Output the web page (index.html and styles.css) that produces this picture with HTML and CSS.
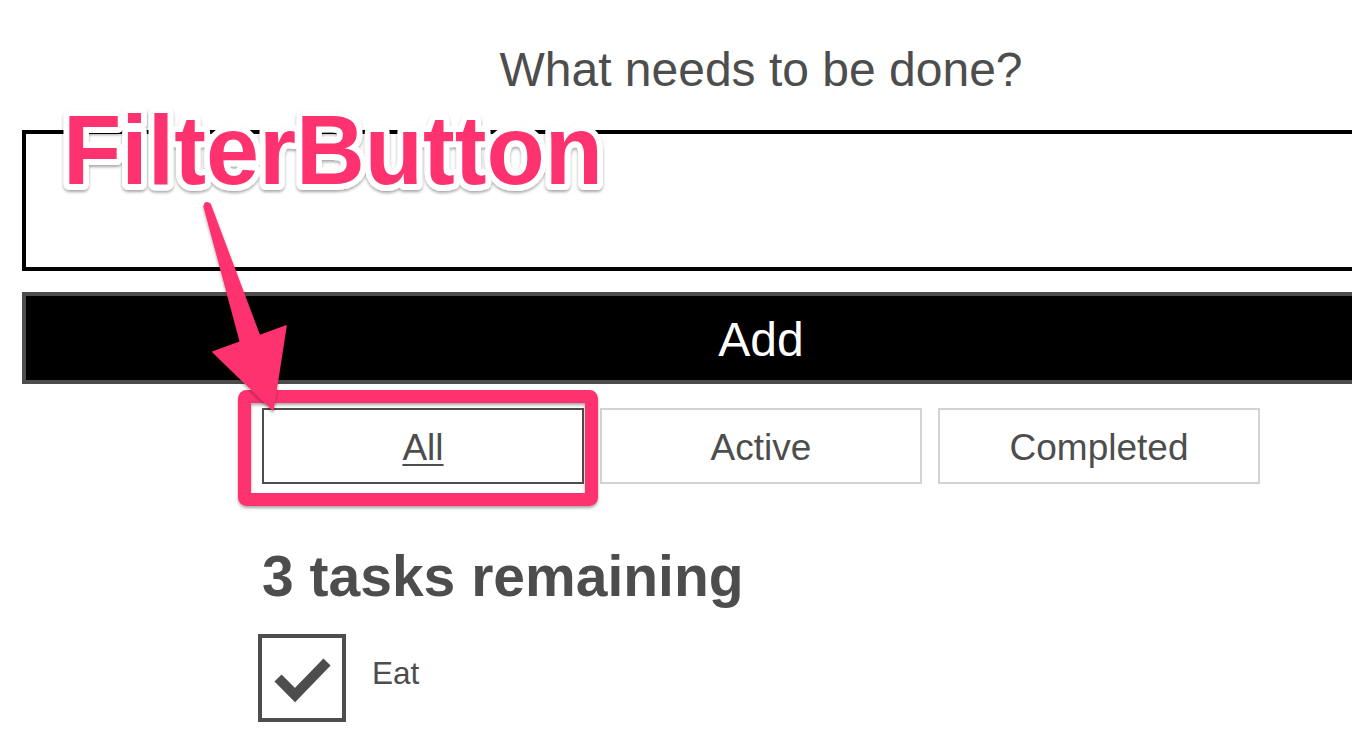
FILE: index.html
```html
<!DOCTYPE html>
<html lang="en">
<head>
<meta charset="utf-8">
<title>Todo</title>
<link rel="stylesheet" href="styles.css">
</head>
<body>
<div class="page">
  <main class="todoapp">
    <h1 class="title">What needs to be done?</h1>
    <input class="new-todo" type="text" aria-label="New todo">
    <button class="add-btn" type="button">Add</button>
    <div class="filters">
      <button class="filter is-pressed" type="button"><span class="filter-label">All</span></button>
      <button class="filter" type="button"><span>Active</span></button>
      <button class="filter" type="button"><span>Completed</span></button>
    </div>
    <section class="list">
      <h2 class="list-heading">3 tasks remaining</h2>
      <ul class="todo-list">
        <li class="todo">
          <span class="check">
            <svg viewBox="0 0 80 80" width="80" height="80" aria-hidden="true">
              <polyline points="16,40 33,57 65,24" fill="none" stroke="#4d4d4d" stroke-width="10" stroke-linejoin="miter"/>
            </svg>
          </span>
          <span class="todo-label">Eat</span>
        </li>
      </ul>
    </section>
  </main>
  <svg class="annotation" width="1352" height="738" viewBox="0 0 1352 738" aria-hidden="true">
    <defs>
      <filter id="shadow" x="-10%" y="-10%" width="120%" height="130%">
        <feDropShadow dx="0" dy="2" stdDeviation="1.6" flood-color="#000" flood-opacity="0.35"/>
      </filter>
    </defs>
    <rect x="244.5" y="396.5" width="347" height="103" rx="2" ry="2" fill="none" stroke="#ff3170" stroke-width="13" filter="url(#shadow)"/>
    <g filter="url(#shadow)">
      <path d="M204,206 L240.5,342 L213,352 L273,410 L286,326 L259.5,335.7 L210,204 Z" fill="#ff3170" stroke="#ff3170" stroke-width="1.5" stroke-linejoin="round"/>
      <circle cx="207" cy="205" r="3" fill="#ff3170"/>
    </g>
    <text class="anno-text" x="63" y="184" textLength="540" lengthAdjust="spacingAndGlyphs" filter="url(#shadow)">FilterButton</text>
  </svg>
</div>
</body>
</html>
```

FILE: styles.css
```css
html, body {
  margin: 0;
  padding: 0;
  overflow: hidden;
  background: #fff;
}

body {
  font-family: "Liberation Sans", Arial, sans-serif;
  color: #4d4d4d;
}

.page {
  position: relative;
  width: 1352px;
  height: 738px;
  overflow: hidden;
}

.todoapp {
  width: 1478px;
  margin-left: 22px;
  padding-top: 42px;
  display: flex;
  flex-direction: column;
}

.title {
  margin: 0;
  font-size: 48px;
  line-height: 56px;
  font-weight: normal;
  text-align: center;
  color: #4d4d4d;
}

.new-todo {
  display: block;
  box-sizing: border-box;
  width: 100%;
  height: 141px;
  margin: 32px 0 0;
  border: 4px solid #000;
  padding: 0 16px;
  font-family: inherit;
  font-size: 40px;
  background: #fff;
  outline: none;
}

.add-btn {
  display: flex;
  align-items: center;
  justify-content: center;
  box-sizing: border-box;
  width: 100%;
  height: 92px;
  margin: 21px 0 0;
  border: 4px solid #4d4d4d;
  background: #000;
  color: #fff;
  font-family: inherit;
  font-size: 48px;
  padding: 3px 0 0;
}

.filters {
  display: flex;
  justify-content: center;
  gap: 16px;
  margin-top: 24px;
}

.filter {
  box-sizing: border-box;
  width: 322px;
  height: 76px;
  border: 2px solid #d3d3d3;
  background: #fff;
  color: #4d4d4d;
  font-family: inherit;
  font-size: 37px;
  padding: 3px 0 0;
  display: flex;
  align-items: center;
  justify-content: center;
}

.filter.is-pressed {
  border-color: #4d4d4d;
}

.filter-label {
  text-decoration: underline;
  text-decoration-thickness: 2px;
  text-underline-offset: 4px;
}

.list {
  width: 998px;
  align-self: center;
}

.list-heading {
  margin: 59px 0 0;
  font-size: 57px;
  line-height: 66px;
  font-weight: bold;
  color: #4d4d4d;
}

.todo-list {
  list-style: none;
  margin: 25px 0 0;
  padding: 0;
}

.todo {
  display: flex;
  align-items: center;
  gap: 26px;
  margin-left: -4px;
}

.check {
  box-sizing: border-box;
  width: 88px;
  height: 88px;
  border: 4px solid #4d4d4d;
  display: block;
}

.check svg {
  display: block;
}

.todo-label {
  font-size: 31.5px;
  color: #4d4d4d;
  padding-bottom: 10px;
}

.annotation {
  position: absolute;
  left: 0;
  top: 0;
  pointer-events: none;
}

.anno-text {
  font-family: "Liberation Sans", Arial, sans-serif;
  font-weight: bold;
  font-size: 99px;
  fill: #ff3170;
  stroke: #fff;
  stroke-width: 12px;
  stroke-linejoin: round;
  paint-order: stroke fill;
}
```
